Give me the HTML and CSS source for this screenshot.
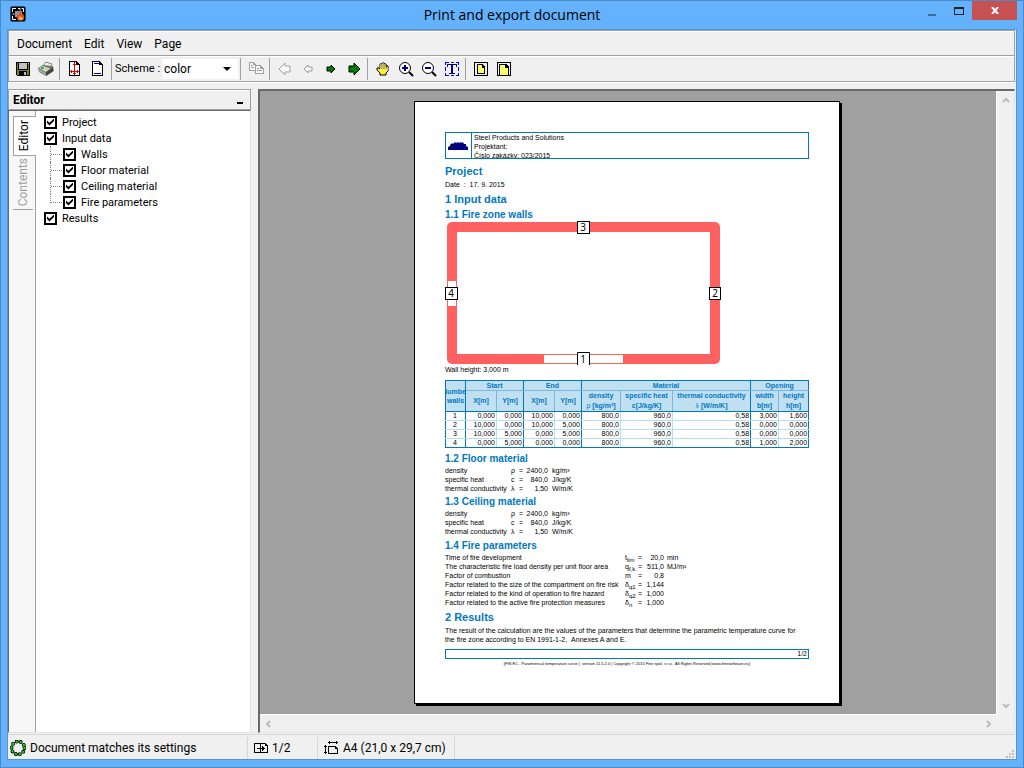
FILE: index.html
```html
<!DOCTYPE html>
<html lang="en">
<head>
    <meta charset="UTF-8">
    <meta name="viewport" content="width=device-width, initial-scale=1.0">
    <title>Print and export document</title>
    <link rel="stylesheet" href="styles.css">
</head>
<body>
    <div class="window">
        <header class="titlebar">
            <svg class="app-icon" width="16" height="16" viewBox="0 0 16 16">
                <rect x="0" y="0" width="16" height="16" rx="3" fill="#1f4e79"/>
                <rect x="1" y="1" width="14" height="14" rx="1" fill="#000"/>
                <path d="M2.500 6V2.500H6M8 2.500h2v2M11.500 2.500h2V6M2.500 8h2M2.500 10v3.500H6" fill="none" stroke="#fff"/>
                <path d="M5 5h7v6H5z" fill="#90949a"/>
                <path d="M10 5c0 3-4 4-3 8 1 2 6 2 7 0 1-3-1-4-1-6-1 1-1 2-2 2 1-2 0-3-1-4z" fill="#e8491d"/>
                <path d="M10 10c-2 2-1 4 1 4s2-2 1-3c-1 0-2 0-2-1z" fill="#ffc04a"/>
            </svg>
            <h1 class="title">Print and export document</h1>
            <div class="window-buttons">
                <button class="win-btn" aria-label="Minimize"><svg width="8" height="12" viewBox="0 0 8 12"><path d="M0 9h8v2H0z" fill="#3f6d9c"/></svg></button>
                <button class="win-btn" aria-label="Maximize"><svg width="10" height="8" viewBox="0 0 10 8" shape-rendering="crispEdges"><path d="M0 0h10v8H0zM1 2v5h8V2z" fill="#222" fill-rule="evenodd"/></svg></button>
                <button class="win-btn close" aria-label="Close"><svg width="8" height="7" viewBox="0 0 8 7"><path d="M1 0l6 7M7 0L1 7" stroke="#fff" stroke-width="2"/></svg></button>
            </div>
        </header>

        <div class="client">
            <nav class="menubar">
                <button>Document</button>
                <button>Edit</button>
                <button>View</button>
                <button>Page</button>
            </nav>

            <div class="toolbar">
                <button class="tool" aria-label="Save">
                    <svg viewBox="0 0 16 16" shape-rendering="crispEdges"><path d="M1 1h14v14H2l-1-1z" fill="#000"/><path d="M2 2h1v7h10V2h1v12h-2v-4H4v4H2z" fill="#808000"/><path d="M4 2h8v6H4z" fill="#c0c0c0"/><path d="M9 11h2v3H9z" fill="#c0c0c0"/><path d="M13 2h1v1h-1z" fill="#fff"/></svg>
                </button>
                <button class="tool" aria-label="Print">
                    <svg viewBox="0 0 16 16"><path d="M5 5l3-4 6 2-3 5z" fill="#eee" stroke="#888" stroke-width="1"/><path d="M0 7l5-3 10 1 1 5-8 5-7-4z" fill="#777"/><path d="M1 7l4-2 8 3-5 3z" fill="#d6d6d6"/><path d="M8 11l7-5v4l-7 5z" fill="#444"/><path d="M1 8l7 4v2l-7-4z" fill="#aaa"/><path d="M3 6h3v2H3z" fill="#1fd11f"/><path d="M8 8h3v1H8z" fill="#e6d61a"/></svg>
                </button>
                <span class="sep"></span>
                <button class="tool" aria-label="Page margins">
                    <svg viewBox="0 0 16 16" shape-rendering="crispEdges"><path d="M2 0h8v1h1v1h1v1h1v12H2z" fill="#000"/><path d="M3 1h6v3h3v10H3z" fill="#fff"/><path d="M7 1h1v13H7zM3 10h9v1H3zM6 3h3v1H6zM6 12h3v1H6zM4 9h1v3H4zM10 9h1v3h-1z" fill="#e00"/></svg>
                </button>
                <button class="tool" aria-label="Header and footer">
                    <svg viewBox="0 0 16 16" shape-rendering="crispEdges"><path d="M2 0h8v1h1v1h1v1h1v12H2z" fill="#000"/><path d="M3 1h6v3h3v10H3z" fill="#fff"/><path d="M4 2h5v1H4zM4 12h7v1H4z" fill="#00c"/></svg>
                </button>
                <span class="sep"></span>
                <label class="scheme" for="scheme">Scheme :</label>
                <div class="select-box">
                    <select id="scheme">
                        <option>color</option>
                        <option>black and white</option>
                    </select>
                </div>
                <span class="sep"></span>
                <button class="tool" aria-label="Copy" disabled>
                    <svg viewBox="0 0 16 16" shape-rendering="crispEdges"><path d="M1 1h5v1h1v1h1v7H1z" fill="#a0a0a0"/><path d="M2 2h3v2h2v5H2z" fill="#f8f8f8"/><path d="M3 4h2v1H3zM3 6h3v1H3z" fill="#a0a0a0"/><path d="M7 4h6v1h1v1h1v1h1v6H7z" fill="#a0a0a0"/><path d="M8 5h4v3h3v4H8z" fill="#f8f8f8"/><path d="M9 7h2v1H9zM9 9h5v1H9z" fill="#a0a0a0"/></svg>
                </button>
                <span class="sep"></span>
                <button class="tool" aria-label="First page" disabled>
                    <svg viewBox="0 0 16 16"><path d="M2 8l6-6v3h5v6H8v3z" fill="#f8f8f8" stroke="#a0a0a0"/></svg>
                </button>
                <button class="tool" aria-label="Previous page" disabled>
                    <svg viewBox="0 0 16 16"><path d="M4 8l4-4v2h4v4H8v2z" fill="#f8f8f8" stroke="#a0a0a0"/></svg>
                </button>
                <button class="tool" aria-label="Next page">
                    <svg viewBox="0 0 16 16"><path d="M12 8L8 4v2H4v4h4v2z" fill="#008000" stroke="#000"/></svg>
                </button>
                <button class="tool" aria-label="Last page">
                    <svg viewBox="0 0 16 16"><path d="M14 8L8 2v3H3v6h5v3z" fill="#008000" stroke="#000"/></svg>
                </button>
                <span class="sep"></span>
                <button class="tool" aria-label="Pan">
                    <svg viewBox="0 0 16 16"><path d="M5 14v-2L2 9V7h2l1 1V3h2V2h2v1h2v2h2v5l-2 2v2z" fill="#ffee32" stroke="#000"/><path d="M7 3v5M9 2v6M11 4v4" stroke="#000"/><path d="M6 3v6M8 2v6M10 3v5M12 6v4" stroke="#fff7a0"/></svg>
                </button>
                <button class="tool" aria-label="Zoom in">
                    <svg viewBox="0 0 16 16"><circle cx="7" cy="7" r="5.5" fill="#fff" stroke="#000"/><path d="M11 11l4 4" stroke="#000" stroke-width="2"/><path d="M4 6h6v2H4zM6 4h2v6H6z" fill="#000080"/></svg>
                </button>
                <button class="tool" aria-label="Zoom out">
                    <svg viewBox="0 0 16 16"><circle cx="7" cy="7" r="5.5" fill="#fff" stroke="#000"/><path d="M11 11l4 4" stroke="#000" stroke-width="2"/><path d="M4 6h6v2H4z" fill="#000080"/></svg>
                </button>
                <button class="tool" aria-label="Select text">
                    <svg viewBox="0 0 16 16" shape-rendering="crispEdges"><path d="M1 1h4v1H2v2H1zM7 1h3v1H7zM12 1h3v3h-1V2h-2zM1 6h1v4H1zM14 6h1v4h-1zM1 12h1v2h3v1H1zM7 14h3v1H7zM14 12h1v3h-3v-1h2z" fill="#00f"/><path d="M3 3h10v3h-1V4H9v8h2v1H5v-1h2V4H4v2H3z" fill="#000080"/></svg>
                </button>
                <span class="sep"></span>
                <button class="tool" aria-label="Whole page">
                    <svg viewBox="0 0 16 16" shape-rendering="crispEdges"><path d="M1 1h14v14H1z" fill="#000"/><path d="M2 2h12v12H2z" fill="#eee"/><path d="M4 3h5l3 3v7H4z" fill="#000"/><path d="M5 4h4v3h2v5H5z" fill="#ffff66"/></svg>
                </button>
                <button class="tool" aria-label="Page width">
                    <svg viewBox="0 0 16 16" shape-rendering="crispEdges"><path d="M1 1h14v14H1z" fill="#000"/><path d="M2 2h12v12H2z" fill="#eee"/><path d="M3 3h7l3 3v8H3z" fill="#000"/><path d="M4 4h5v3h3v7H4z" fill="#ffff66"/></svg>
                </button>
            </div>

            <main class="workspace">
                <section class="editor">
                    <div class="editor-head">
                        <h2>Editor</h2>
                        <button class="collapse" aria-label="Collapse"></button>
                    </div>
                    <div class="editor-body">
                        <div class="tabs">
                            <button class="tab active"><span>Editor</span></button>
                            <button class="tab"><span>Contents</span></button>
                        </div>
                        <ul class="tree">
                            <li><label><input type="checkbox" checked>Project</label></li>
                            <li>
                                <label><input type="checkbox" checked>Input data</label>
                                <ul class="branch">
                                    <li><label><input type="checkbox" checked>Walls</label></li>
                                    <li><label><input type="checkbox" checked>Floor material</label></li>
                                    <li><label><input type="checkbox" checked>Ceiling material</label></li>
                                    <li><label><input type="checkbox" checked>Fire parameters</label></li>
                                </ul>
                            </li>
                            <li><label><input type="checkbox" checked>Results</label></li>
                        </ul>
                    </div>
                </section>

                <section class="preview">
                    <div class="canvas">
                        <article class="page">
                            <div class="page-head">
                                <div class="logo">
                                    <svg width="21" height="8" viewBox="0 0 21 8"><path d="M0 8V5l2-1V3l2-2 1 1 2-2 1 1 2-1 1 1 2-1 1 1 1-1 1 2h2v2l2 1v3z" fill="#000080"/><path d="M3 2h2l1 2-2 1z" fill="#000"/></svg>
                                </div>
                                <div class="company">
                                    <p>Steel Products and Solutions</p>
                                    <p>Projektant:</p>
                                    <p>Číslo zakázky: 023/2015</p>
                                </div>
                            </div>

                            <h3>Project</h3>
                            <p>Date &nbsp;: &nbsp;17. 9. 2015</p>
                            <h3>1 Input data</h3>
                            <h4>1.1 Fire zone walls</h4>
                            <svg class="plan" width="276" height="143" viewBox="0 0 276 143">
                                <rect x="7" y="5" width="263" height="132" fill="none" stroke="#ff6060" stroke-width="10" stroke-linejoin="round"/>
                                <rect x="99" y="133" width="79" height="8" fill="#fff"/>
                                <rect x="3" y="59" width="8" height="25" fill="#fff"/>
                                <g fill="#fff" stroke="#000">
                                    <rect x="132.5" y="-.5" width="12" height="12"/>
                                    <rect x="264.5" y="65.5" width="11" height="12"/>
                                    <rect x=".5" y="65.5" width="12" height="12"/>
                                    <path d="M132.500 143v-12.500h12V143"/>
                                </g>
                                <g class="plan-label">
                                    <text x="138" y="9">3</text>
                                    <text x="270" y="75">2</text>
                                    <text x="6" y="75">4</text>
                                    <text x="138" y="141">1</text>
                                </g>
                            </svg>
                            <p>Wall height: 3,000 m</p>

                            <table class="walls">
                                <colgroup>
                                    <col class="c20"><col class="c31"><col class="c27"><col class="c31"><col class="c27"><col class="c39"><col class="c52"><col class="c78"><col class="c28"><col class="c30">
                                </colgroup>
                                <thead>
                                    <tr>
                                        <th class="group" rowspan="2"><div class="clip">Number</div><div class="clip">walls</div></th>
                                        <th class="group" colspan="2">Start</th>
                                        <th class="group" colspan="2">End</th>
                                        <th class="group" colspan="3">Material</th>
                                        <th class="group" colspan="2">Opening</th>
                                    </tr>
                                    <tr class="units">
                                        <th>X[m]</th>
                                        <th class="group">Y[m]</th>
                                        <th>X[m]</th>
                                        <th class="group">Y[m]</th>
                                        <th>density<br><i>ρ</i> [kg/m³]</th>
                                        <th>specific heat<br>c[J/kg/K]</th>
                                        <th class="group">thermal conductivity<br><i>λ</i> [W/m/K]</th>
                                        <th>width<br>b[m]</th>
                                        <th>height<br>h[m]</th>
                                    </tr>
                                </thead>
                                <tbody>
                                    <tr><td>1</td><td>0,000</td><td>0,000</td><td>10,000</td><td>0,000</td><td>800,0</td><td>960,0</td><td>0,58</td><td>3,000</td><td>1,600</td></tr>
                                    <tr><td>2</td><td>10,000</td><td>0,000</td><td>10,000</td><td>5,000</td><td>800,0</td><td>960,0</td><td>0,58</td><td>0,000</td><td>0,000</td></tr>
                                    <tr><td>3</td><td>10,000</td><td>5,000</td><td>0,000</td><td>5,000</td><td>800,0</td><td>960,0</td><td>0,58</td><td>0,000</td><td>0,000</td></tr>
                                    <tr><td>4</td><td>0,000</td><td>5,000</td><td>0,000</td><td>0,000</td><td>800,0</td><td>960,0</td><td>0,58</td><td>1,000</td><td>2,000</td></tr>
                                </tbody>
                            </table>

                            <h4>1.2 Floor material</h4>
                            <table class="params">
                                <tr><td>density</td><td>ρ</td><td>=</td><td>2400,0</td><td>kg/m³</td></tr>
                                <tr><td>specific heat</td><td>c</td><td>=</td><td>840,0</td><td>J/kg/K</td></tr>
                                <tr><td>thermal conductivity</td><td>λ</td><td>=</td><td>1,50</td><td>W/m/K</td></tr>
                            </table>

                            <h4>1.3 Ceiling material</h4>
                            <table class="params">
                                <tr><td>density</td><td>ρ</td><td>=</td><td>2400,0</td><td>kg/m³</td></tr>
                                <tr><td>specific heat</td><td>c</td><td>=</td><td>840,0</td><td>J/kg/K</td></tr>
                                <tr><td>thermal conductivity</td><td>λ</td><td>=</td><td>1,50</td><td>W/m/K</td></tr>
                            </table>

                            <h4 class="spaced">1.4 Fire parameters</h4>
                            <table class="params wide">
                                <tr><td>Time of fire development</td><td>t<sub>lim</sub></td><td>=</td><td>20,0</td><td>min</td></tr>
                                <tr><td>The characteristic fire load density per unit floor area</td><td>q<sub>f,k</sub></td><td>=</td><td>511,0</td><td>MJ/m²</td></tr>
                                <tr><td>Factor of combustion</td><td>m</td><td>=</td><td>0,8</td><td></td></tr>
                                <tr><td>Factor related to the size of the compartment on fire risk</td><td>δ<sub>q1</sub></td><td>=</td><td>1,144</td><td></td></tr>
                                <tr><td>Factor related to the kind of operation to fire hazard</td><td>δ<sub>q2</sub></td><td>=</td><td>1,000</td><td></td></tr>
                                <tr><td>Factor related to the active fire protection measures</td><td>δ<sub>n</sub></td><td>=</td><td>1,000</td><td></td></tr>
                            </table>

                            <h3>2 Results</h3>
                            <p>The result of the calculation are the values of the parameters that determine the parametric temperature curve for<br>the fire zone according to EN 1991-1-2, &nbsp;Annexes A and E.</p>

                            <div class="page-number">1/2</div>
                            <p class="copyright">[FIN EC - Parametrical temperature curve | &nbsp;version 11.5.2.0 | Copyright © 2015 Fine spol. s r.o. &nbsp;All Rights Reserved |www.finesoftware.eu]</p>
                        </article>
                    </div>
                    <div class="vscroll">
                        <svg width="8" height="6" viewBox="0 0 8 6"><path d="M1 5l3-3 3 3" fill="none" stroke="#bcbcbc" stroke-width="2"/></svg>
                        <svg width="8" height="6" viewBox="0 0 8 6"><path d="M1 1l3 3 3-3" fill="none" stroke="#bcbcbc" stroke-width="2"/></svg>
                    </div>
                    <div class="hscroll">
                        <svg width="6" height="8" viewBox="0 0 6 8"><path d="M5 1L2 4l3 3" fill="none" stroke="#bcbcbc" stroke-width="2"/></svg>
                        <svg width="6" height="8" viewBox="0 0 6 8"><path d="M1 1l3 3-3 3" fill="none" stroke="#bcbcbc" stroke-width="2"/></svg>
                    </div>
                </section>
            </main>

            <footer class="statusbar">
                <div class="status state">
                    <svg width="16" height="16" viewBox="0 0 16 16"><g fill="none" stroke-linecap="round" stroke-dasharray="0 4.080"><circle cx="8" cy="8" r="6.500" stroke="#000" stroke-width="4"/><circle cx="8" cy="8" r="6.500" stroke="#1ee01e" stroke-width="2.400"/></g></svg>
                    <span>Document matches its settings</span>
                </div>
                <div class="status pages">
                    <svg width="14" height="12" viewBox="0 0 14 12" shape-rendering="crispEdges"><path d="M0 1h12v1h1v1h1v8H0zM1 2v8h5V7H3V6h3V2zM7 2v4h1V4h1v1h1v1h1v1h-1v1H9v1H8V7H7v3h6V4h-2V2z" fill="#000" fill-rule="evenodd"/></svg>
                    <span>1/2</span>
                </div>
                <div class="status size">
                    <svg width="15" height="13" viewBox="0 0 15 13" shape-rendering="crispEdges"><path d="M4 5h8v1h1v1h1v6H4zM5 6v6h8V8h-2V6z" fill="#000" fill-rule="evenodd"/><path d="M4 1h10v1H4zM5 0h1v3H5zM12 0h1v3h-1zM1 4h1v9H1zM0 5h3v1H0zM0 11h3v1H0z" fill="#000"/></svg>
                    <span>A4 (21,0 x 29,7 cm)</span>
                </div>
                <svg class="grip" width="8" height="8" viewBox="0 0 8 8"><path d="M6 0h2v2H6zM3 3h2v2H3zM6 3h2v2H6zM0 6h2v2H0zM3 6h2v2H3zM6 6h2v2H6z" fill="#bfbfbf"/></svg>
            </footer>
        </div>
    </div>
</body>
</html>
```
FILE: styles.css
```css
* {
    box-sizing: border-box;
}
body {
    margin: 0;
    font-family: Roboto, "Noto Sans", sans-serif;
    font-size: 12px;
    line-height: 16px;
    color: #000;
}
h1, h2, h3, h4, p, ul {
    margin: 0;
    padding: 0;
}
button {
    margin: 0;
    padding: 0;
    border: 0;
    background: none;
    font: inherit;
    color: inherit;
}
svg {
    display: block;
    flex: none;
}

/* window frame */
.window {
    display: flex;
    flex-direction: column;
    height: 100vh;
    padding: 0 6px 7px;
    border: 1px solid #4b8ac6;
    background: #64b1fc;
}
.titlebar {
    display: grid;
    grid-template-columns: 1fr auto 1fr;
    height: 28px;
}
.app-icon {
    margin: 5px 0 0 3px;
}
.title {
    font-family: "Open Sans", sans-serif;
    font-size: 14px;
    font-weight: normal;
    line-height: 28px;
}
.window-buttons {
    display: flex;
    justify-content: flex-end;
    height: 19px;
}
.win-btn {
    display: flex;
    justify-content: center;
    align-items: center;
    width: 27px;
}
.win-btn.close {
    width: 45px;
    background: #c75050;
}

.client {
    display: flex;
    flex-direction: column;
    flex: 1;
    min-height: 0;
    padding-right: 1px;
    background: #f0f0f0;
    border: 1px solid #5595d6;
}
.menubar {
    display: flex;
    gap: 12px;
    height: 26px;
    padding: 1px 8px 0;
    border: 1px solid #a0a0a0;
    box-shadow: inset 0 1px #fff;
}
.toolbar {
    display: flex;
    align-items: center;
    height: 26px;
    padding-left: 2px;
    border: 1px solid #a0a0a0;
    border-top: 0;
    box-shadow: inset 0 1px #fff, 0 1px #fff;
}
.tool {
    display: flex;
    justify-content: center;
    width: 23px;
}
.tool svg {
    width: 16px;
    height: 16px;
}
.sep {
    width: 1px;
    height: 22px;
    margin: 0 3px 0 2px;
    background: #a0a0a0;
}
.scheme {
    width: 47px;
    font-size: 11px;
    white-space: nowrap;
}
.select-box {
    position: relative;
    width: 76px;
}
.select-box select {
    width: 100%;
    height: 20px;
    padding: 0 2px;
    border: 0;
    border-radius: 0;
    background: #fff;
    font: inherit;
    color: inherit;
    appearance: none;
}
.select-box::after {
    content: "";
    position: absolute;
    top: 8px;
    right: 7px;
    border: 4px solid transparent;
    border-top-color: #000;
    border-bottom: 0;
}

/* editor panel */
.workspace {
    display: flex;
    flex: 1;
    gap: 7px;
    min-height: 0;
    padding: 7px 0 1px;
}
.editor {
    display: flex;
    flex-direction: column;
    width: 243px;
}
.editor-head {
    display: flex;
    justify-content: space-between;
    height: 21px;
    padding: 0 7px 0 4px;
    border: 1px solid #a0a0a0;
    box-shadow: inset 0 1px #fff;
}
.editor-head h2 {
    font-size: 12px;
    line-height: 20px;
}
.collapse {
    width: 6px;
    height: 2px;
    margin-top: 12px;
    background: #000;
}
.editor-body {
    display: flex;
    flex: 1;
    border: 1px solid #696969;
    border-right-color: #e3e3e3;
    border-bottom-color: #e3e3e3;
    background: #fff;
}
.tabs {
    width: 27px;
    padding: 5px 0 0 4px;
    background: #f7f7f7;
    border-right: 1px solid #a0a0a0;
}
.tab {
    display: flex;
    justify-content: center;
    align-items: center;
    width: 20px;
    height: 54px;
    border-bottom: 1px solid #a0a0a0;
    color: #a0a0a0;
}
.tab.active {
    width: 23px;
    height: 40px;
    padding-right: 2px;
    border: 1px solid #a0a0a0;
    border-right: 0;
    background: #fff;
    color: #000;
}
.tab span {
    writing-mode: vertical-rl;
    transform: rotate(180deg);
}
.tree {
    padding: 3px 0 0 8px;
    font-size: 11px;
    line-height: 17px;
}
.tree, .branch {
    list-style: none;
}
.tree label {
    display: flex;
    align-items: center;
    gap: 5px;
    height: 16px;
}
.tree input {
    display: grid;
    width: 13px;
    height: 13px;
    margin: 0;
    border: 2px solid #000;
    background: #fff;
    appearance: none;
}
.tree input:checked::before {
    content: "";
    width: 7px;
    height: 7px;
    margin: 1px;
    background: #000;
    clip-path: polygon(0 30%, 35% 60%, 100% 0, 100% 35%, 35% 100%, 0 65%);
}
.branch {
    padding-left: 6px;
}
.branch li {
    position: relative;
    padding-left: 13px;
}
.branch li::before {
    content: "";
    position: absolute;
    left: 0;
    top: 0;
    width: 12px;
    height: 100%;
    border-left: 1px dotted #808080;
}
.branch li:last-child::before {
    height: 9px;
}
.branch li::after {
    content: "";
    position: absolute;
    left: 1px;
    top: 8px;
    width: 11px;
    border-top: 1px dotted #808080;
}

/* preview area */
.preview {
    display: grid;
    grid-template-columns: 1fr 17px;
    grid-template-rows: 1fr 17px;
    flex: 1;
    min-width: 0;
    border: 1px solid #e3e3e3;
    border-top: 2px solid #696969;
    border-left: 2px solid #696969;
}
.canvas {
    display: flex;
    justify-content: center;
    align-items: flex-start;
    min-height: 0;
    padding: 10px 2px 0 0;
    overflow: hidden;
    background: #a0a0a0;
    border-right: 1px solid #fff;
    border-bottom: 1px solid #fff;
}
.vscroll, .hscroll {
    display: flex;
    justify-content: space-between;
    align-items: center;
    padding: 6px 5px;
}
.vscroll {
    flex-direction: column;
}

/* printed page */
.page {
    width: 426px;
    min-height: 603px;
    padding: 30px;
    border: 1px solid #000;
    box-shadow: 2px 2px #000;
    background: #fff;
    font-family: "Liberation Sans", Arial, sans-serif;
    font-size: 7px;
    line-height: 9px;
    white-space: nowrap;
}
.page h3, .page h4 {
    color: #0078c0;
}
.page h3 {
    margin: 2px 0 1px;
    font-size: 11px;
    line-height: 16px;
}
.page h4 {
    margin: 1px 0 0;
    font-size: 10px;
    line-height: 14px;
}
.page h4.spaced {
    margin-top: 3px;
}
.page-head {
    display: flex;
    height: 27px;
    margin-bottom: 4px;
    border: 1px solid #0078c0;
    overflow: hidden;
}
.logo {
    display: flex;
    justify-content: center;
    align-items: center;
    width: 26px;
    border-right: 1px solid #0078c0;
}
.company {
    padding-left: 2px;
}
.plan {
    overflow: visible;
}
.plan-label {
    font-family: "Noto Sans", sans-serif;
    font-size: 10px;
    text-anchor: middle;
}
.walls {
    width: 364px;
    margin: 6px 0 4px;
    border-collapse: collapse;
    table-layout: fixed;
    border: 1px solid #0078c0;
}
.c20 { width: 20px; }
.c27 { width: 27px; }
.c28 { width: 28px; }
.c30 { width: 30px; }
.c31 { width: 31px; }
.c39 { width: 39px; }
.c52 { width: 52px; }
.c78 { width: 78px; }
.walls th, .walls td {
    padding: 0;
    border: 1px solid #b8dcf0;
    line-height: 8px;
}
.walls th {
    border-color: #78b8e0;
    background: #c0e0f2;
    color: #0078c0;
    line-height: 9px;
}
.walls .units th {
    height: 21px;
    border-bottom-color: #0078c0;
    line-height: 10px;
}
.walls .group,
.walls td:nth-child(1), .walls td:nth-child(3), .walls td:nth-child(5), .walls td:nth-child(8) {
    border-right-color: #0078c0;
}
.walls .group[rowspan] {
    border-bottom-color: #0078c0;
}
.walls thead tr:first-child th {
    border-top-color: #0078c0;
}
.walls tr > :first-child.group, .walls td:first-child {
    border-left-color: #0078c0;
}
.walls td:last-child, .walls .units th:last-child {
    border-right-color: #0078c0;
}
.walls tbody tr:last-child td {
    border-bottom-color: #0078c0;
}
.walls td {
    padding-right: 1px;
    text-align: right;
}
.walls td:first-child {
    text-align: center;
}
.walls i {
    font-weight: normal;
    font-style: normal;
}
.clip {
    display: flex;
    justify-content: center;
    overflow: hidden;
}
.params {
    width: 147px;
    margin-bottom: 2px;
    border-collapse: collapse;
    table-layout: fixed;
}
.params td {
    height: 9px;
    padding: 0;
}
.params td:nth-child(1) {
    width: 66px;
}
.params td:nth-child(2) {
    width: 8px;
}
.params td:nth-child(3) {
    width: 5px;
}
.params td:nth-child(4) {
    width: 24px;
    text-align: right;
}
.params td:nth-child(5) {
    padding-left: 4px;
}
.params.wide {
    width: 260px;
}
.wide td:nth-child(1) {
    width: 180px;
}
.wide td:nth-child(2) {
    width: 13px;
}
.wide td:nth-child(4) {
    width: 21px;
}
.params.wide td:nth-child(5) {
    padding-left: 3px;
}
.params sub {
    font-size: 6px;
    line-height: 0;
}
.page-number {
    height: 10px;
    margin-top: 5px;
    padding-right: 1px;
    border: 1px solid #0078c0;
    line-height: 8px;
    text-align: right;
}
.copyright {
    font-size: 4px;
    text-align: center;
}

/* status bar */
.statusbar {
    display: flex;
    align-items: center;
    height: 25px;
    padding-top: 1px;
    border-top: 1px solid #d7d7d7;
}
.status {
    display: flex;
    align-items: center;
    gap: 4px;
    height: 22px;
    padding-left: 6px;
    border-right: 1px solid #d7d7d7;
}
.status.state {
    width: 240px;
    padding-left: 2px;
}
.status.pages {
    width: 70px;
}
.status.size {
    width: 137px;
}
.grip {
    margin: 12px 1px 0 auto;
}
```
